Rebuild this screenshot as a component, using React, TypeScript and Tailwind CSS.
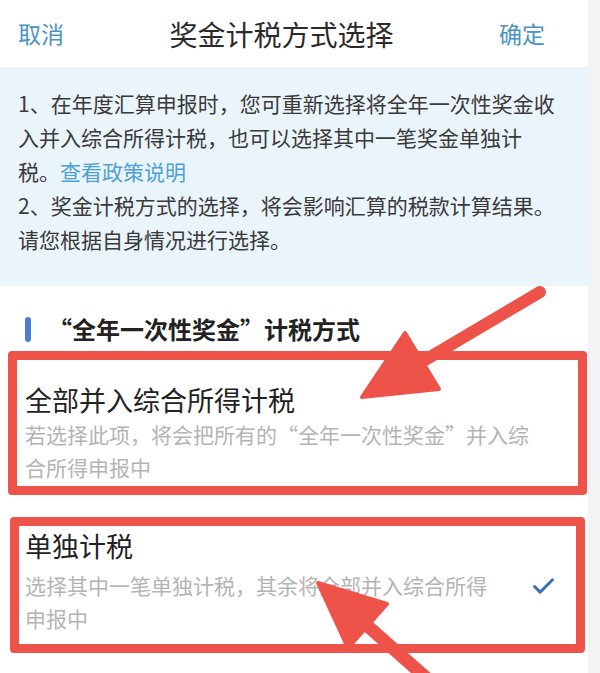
import { Check } from 'lucide-react';

const FONT = "font-['Noto_Sans_CJK_SC','Noto_Sans',sans-serif]";

function Arrows() {
  return (
    <svg className="pointer-events-none absolute inset-0" width="600" height="673" viewBox="0 0 600 673">
      <g fill="#ee534a" stroke="#ee534a" strokeLinecap="round" strokeLinejoin="round">
        <line x1="540" y1="292" x2="420" y2="363" strokeWidth="12" />
        <polygon points="362,397 439,389 405,333" strokeWidth="4" />
        <line x1="440" y1="690" x2="362" y2="621" strokeWidth="13" />
        <polygon points="318,583 387,604 348,648" strokeWidth="4" />
      </g>
    </svg>
  );
}

export default function App() {
  return (
    <div className={`relative flex w-[600px] h-[673px] overflow-hidden bg-white ${FONT}`}>
      <div className="w-[588px] flex flex-col">
        <header className="h-[67px] flex items-center pl-[18px] pr-[43px]">
          <span className="flex-1 text-[23px] text-[#4a93c2]">取消</span>
          <h1 className="text-[28px] text-[#2a2a2a]">奖金计税方式选择</h1>
          <span className="flex-1 text-right text-[23px] text-[#4a93c2]">确定</span>
        </header>

        <div className="bg-[#eaf4fb] pl-[18px] pr-[20px] pt-[19px] pb-[30px] text-[21px] leading-[34px] text-[#3a3a3a]">
          <p>
            1、在年度汇算申报时，您可重新选择将全年一次性奖金收入并入综合所得计税，也可以选择其中一笔奖金单独计
            <br />
            税。<span className="text-[#4ea0d6]">查看政策说明</span>
          </p>
          <p>2、奖金计税方式的选择，将会影响汇算的税款计算结果。请您根据自身情况进行选择。</p>
        </div>

        <div className="flex items-center gap-[17px] pl-[25px] pt-[28px] mb-[7px] h-[58px]">
          <span className="w-[6px] h-[25px] rounded-full bg-[#4a7fd6]" />
          <h2 className="text-[24px] leading-[30px] font-bold text-[#222]">“全年一次性奖金”计税方式</h2>
        </div>

        <div className="ml-[8px] mr-[1px] border-[9px] border-[#ee534a] rounded-[4px] pl-[8px] pt-[22px] pb-[2px]">
          <div className="text-[27px] leading-[36px] text-[#222]">全部并入综合所得计税</div>
          <div className="max-w-[515px] text-[21px] leading-[33px] text-[#b4b4b4]">
            若选择此项，将会把所有的“全年一次性奖金”并入综合所得申报中
          </div>
        </div>

        <div className="mt-[22px] ml-[10px] mr-[3px] border-[9px] border-[#ee534a] rounded-[4px] pl-[6px] pr-[19px] pt-[2px] pb-[9px]">
          <div className="text-[27px] leading-[36px] text-[#222]">单独计税</div>
          <div className="mt-[5px] flex items-start justify-between">
            <div className="w-[478px] text-[21px] leading-[33px] text-[#b4b4b4]">
              选择其中一笔单独计税，其余将全部并入综合所得申报中
            </div>
            <Check className="mt-[4px] w-[27px] h-[27px] text-[#3d6fb6]" strokeWidth={2.6} />
          </div>
        </div>
      </div>
      <div className="flex-1 bg-[#f2f3f5]" />
      <Arrows />
    </div>
  );
}
